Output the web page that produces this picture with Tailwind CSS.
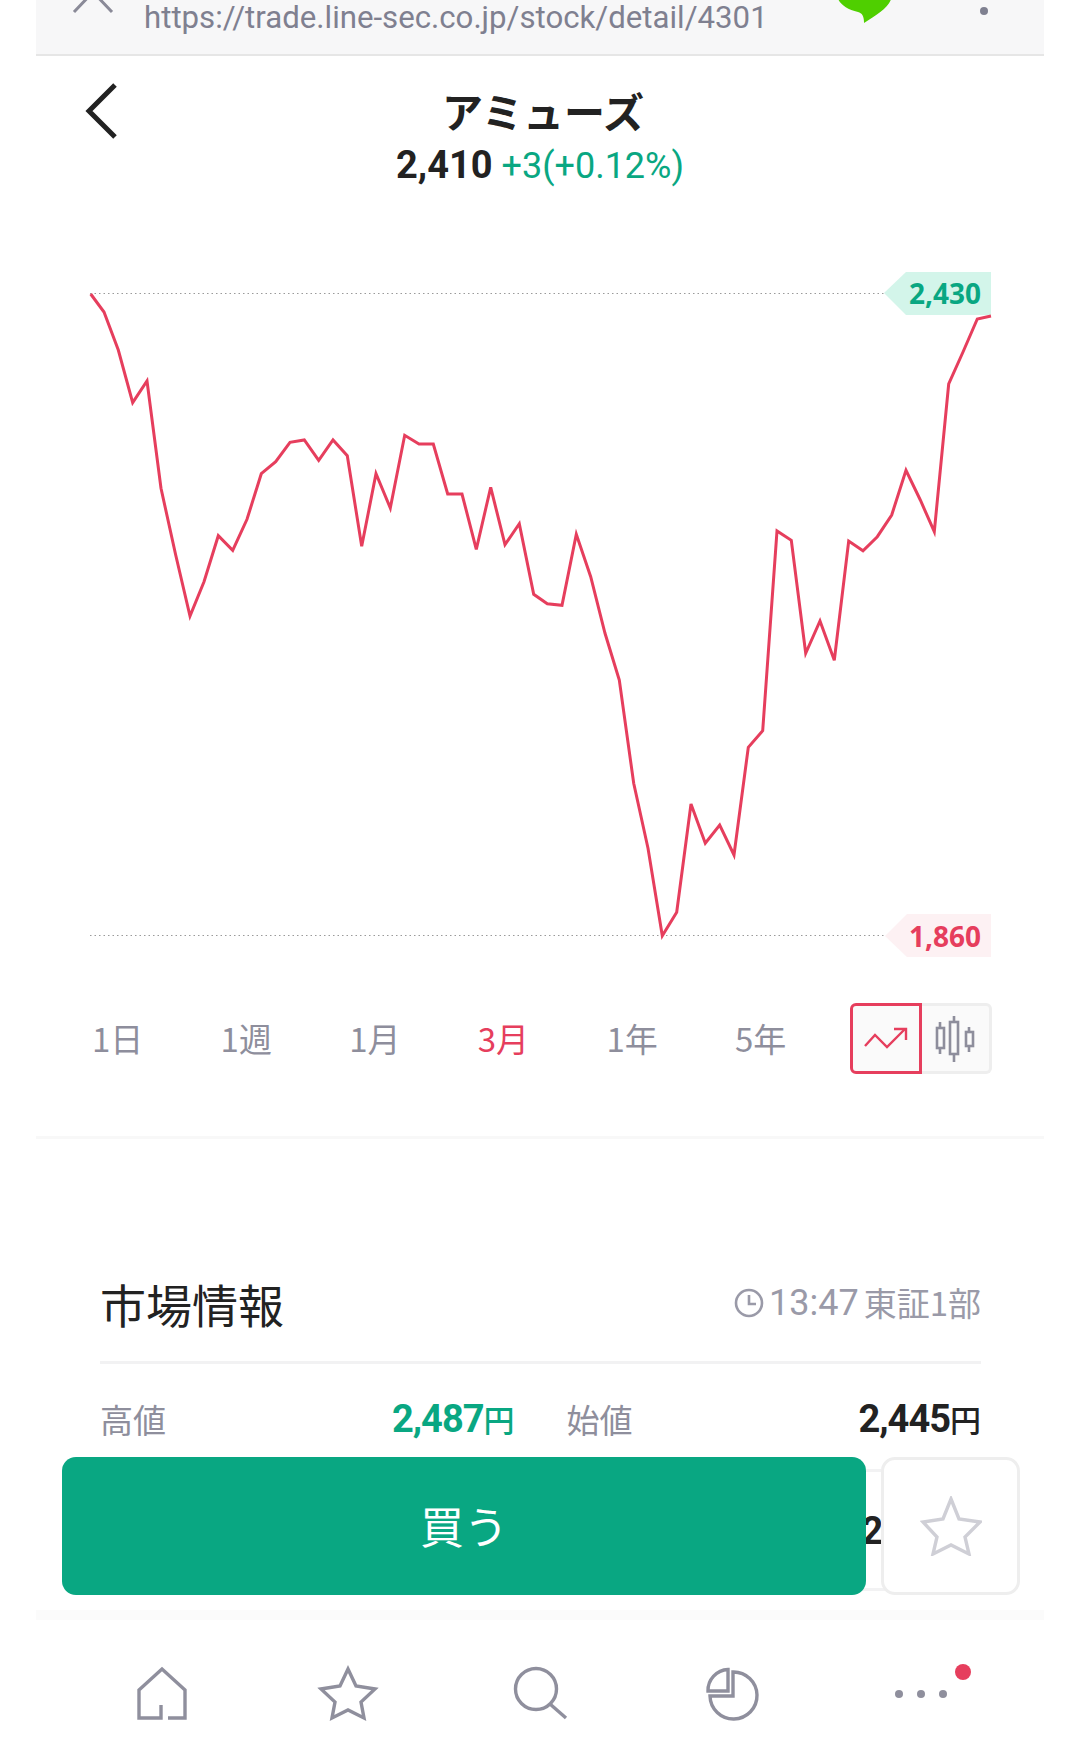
<!DOCTYPE html>
<html lang="ja">
<head>
<meta charset="UTF-8">
<meta name="viewport" content="width=device-width, initial-scale=1.0">
<title>アミューズ</title>
<script src="https://cdn.jsdelivr.net/npm/@tailwindcss/browser@4"></script>
</head>
<body class="bg-white">
<div class="relative w-[1080px] h-[1760px] overflow-hidden bg-white px-[36px] font-['Roboto','Noto_Sans_CJK_JP',sans-serif] text-[#222]">

  <!-- browser bar -->
  <div class="relative h-[56px] bg-[#f7f7f8] border-b-2 border-[#e6e6e6] pl-[108px] text-[31.2px] leading-[36px] text-[#7f8090]">
    <svg class="absolute left-0 top-0 overflow-visible" width="1008" height="54" viewBox="36 0 1008 54" fill="none">
      <path d="M74 12 L93 -8 L112 12" stroke="#8a8a98" stroke-width="3"/>
      <path d="M864 -34 C884 -34 892 -20 892 -6 C892 6 878 14 864 23 C864 16 862 13 858 12 C845 9 837 2 837 -6 C837 -20 846 -34 864 -34Z" fill="#4fcf00"/>
      <circle cx="984" cy="11" r="4" fill="#7f8090"/>
    </svg>
    <div class="whitespace-nowrap">https://trade.line-sec.co.jp/stock/detail/4301</div>
  </div>

  <!-- header -->
  <div class="relative pt-[32px] text-center">
    <svg class="absolute left-0 top-0" width="120" height="100" viewBox="36 56 120 100" fill="none">
      <path d="M115 85 L89 111 L115 137" stroke="#222" stroke-width="5"/>
    </svg>
    <div class="h-[51px] pl-[6px] leading-[52px] text-[41px] font-bold">アミューズ</div>
    <div class="h-[52px] leading-[52px] text-[36px]"><span class="text-[38px] font-bold">2,410</span> <span class="text-[#09a782]">+3(+0.12%)</span></div>
  </div>

  <!-- chart -->
  <svg class="mt-[9px] block" width="1008" height="780" viewBox="36 200 1008 780" fill="none">
    <line x1="90" y1="293.5" x2="884" y2="293.5" stroke="#9a9a9a" stroke-width="1" stroke-dasharray="1.5 3"/>
    <line x1="90" y1="935.5" x2="885" y2="935.5" stroke="#9a9a9a" stroke-width="1" stroke-dasharray="1.5 3"/>
    <polygon points="884,293 906,272 991,272 991,315 906,315" fill="#d3f5ea"/>
    <polygon points="885,936 907,914 991,914 991,957 907,957" fill="#fdf1f3"/>
    <text x="981" y="304" text-anchor="end" font-family="Open Sans" font-weight="700" font-size="28" fill="#09a782">2,430</text>
    <text x="981" y="947" text-anchor="end" font-family="Open Sans" font-weight="700" font-size="28" fill="#e63e5d">1,860</text>
    <polyline stroke="#e63e5d" stroke-width="3" stroke-linejoin="miter" points="90.7,294 104,312 118.3,350 132.7,402.7 147,381 161,488.3 175.7,555 190,616 204,581.7 218.3,535.7 232.7,550.3 247,519.3 261.3,473.7 275.7,461.7 290,442.3 304.3,440 318.7,460.3 333,440 347.3,455.7 361.7,546.3 376,473.7 390.3,508 404.7,435.3 419,444 433.3,444 447.7,494 462,494 476.3,549.3 490.7,487.3 505,544.7 519.3,523.7 533.7,594.3 547.3,603.7 562,605.3 576.3,534.3 590.7,576.7 605,633.3 619.3,680 633.7,783.3 648,848.3 662.3,935.7 676.7,912.3 691,804 705.3,843.3 719.7,825 734,855 748.3,747.3 762.7,730.7 777,531 791.3,540.3 805.7,653.3 820,621 834.3,660.3 848.7,541 863,550.7 877.3,536.7 891.7,515 906,470.4 920.3,500 934.3,531.7 948.7,384 963,352 977.3,319 991,316"/>
  </svg>

  <!-- range tabs -->
  <div class="flex items-center mt-[23px] h-[71px] pl-[56px] font-['Noto_Sans_CJK_JP',sans-serif] text-[33px] text-[#8e8e9c]">
    <div class="w-[128.6px]">1日</div>
    <div class="w-[128.6px]">1週</div>
    <div class="w-[128.6px]">1月</div>
    <div class="w-[128.6px] text-[#e63e5d]">3月</div>
    <div class="w-[128.6px]">1年</div>
    <div class="w-[115px]">5年</div>
    <div class="flex h-[71px]">
      <div class="flex items-center justify-center w-[72px] h-[71px] rounded-l-md border-[3px] border-[#e63e5d] bg-[#fafafa]">
        <svg width="44" height="24" viewBox="865 1028 44 24" fill="none" stroke="#e63e5d" stroke-width="2.4">
          <path d="M866 1047 L876 1036 L888 1048 L906 1030"/>
          <path d="M895 1030 H907 V1041"/>
        </svg>
      </div>
      <div class="flex items-center justify-center w-[70px] h-[71px] rounded-r-md border-[3px] border-l-0 border-[#eeeeee] bg-[#fafafa]">
        <svg width="40" height="46" viewBox="936 1016 40 46" fill="none" stroke="#8e8e9c" stroke-width="2.6">
          <path d="M941 1022 V1054 M955 1016 V1062 M970 1027 V1052"/>
          <rect x="938" y="1028" width="7" height="20" fill="#fafafa"/>
          <rect x="951" y="1022" width="8" height="32" fill="#fafafa"/>
          <rect x="967" y="1032" width="7" height="14" fill="#fafafa"/>
        </svg>
      </div>
    </div>
  </div>

  <div class="mt-[62px] h-[3px] bg-[#f8f8f8]"></div>

  <!-- market info -->
  <div class="pl-[64px] pr-[63px] pt-[139px]">
    <div class="flex items-center justify-between h-[50px]">
      <div class="font-['Noto_Sans_CJK_JP',sans-serif] text-[46px] leading-[50px]">市場情報</div>
      <div class="flex items-center text-[#9a9aa8]">
        <svg width="30" height="30" viewBox="733 1288 30 30" fill="none" stroke="#9a9aa8" stroke-width="2.6">
          <circle cx="748" cy="1303" r="13"/>
          <path d="M748 1295 V1304 H755"/>
        </svg>
        <span class="ml-[5px] text-[36px]">13:47</span>
        <span class="ml-[5px] font-['Noto_Sans_CJK_JP',sans-serif] text-[33px]">東証1部</span>
      </div>
    </div>
    <div class="mt-[33px] h-[3px] bg-[#f2f2f3]"></div>
    <div class="grid grid-cols-2 gap-x-[52px]">
      <div class="flex items-center justify-between h-[108px] pt-[6px] border-b-[3px] border-[#f2f2f3]">
        <span class="font-['Noto_Sans_CJK_JP',sans-serif] text-[33px] text-[#8e8e9c]">高値</span>
        <span class="text-[38px] font-bold text-[#09a782] tracking-[-1px]">2,487<span class="font-['Noto_Sans_CJK_JP',sans-serif] text-[31px] font-medium tracking-normal">円</span></span>
      </div>
      <div class="flex items-center justify-between h-[108px] pt-[6px] border-b-[3px] border-[#f2f2f3]">
        <span class="font-['Noto_Sans_CJK_JP',sans-serif] text-[33px] text-[#8e8e9c]">始値</span>
        <span class="text-[38px] font-bold tracking-[-1px]">2,445<span class="font-['Noto_Sans_CJK_JP',sans-serif] text-[31px] font-medium tracking-normal">円</span></span>
      </div>
      <div class="h-[119px] border-b-[3px] border-[#f2f2f3]"></div>
      <div class="flex items-center justify-end h-[119px] pt-[2px] border-b-[3px] border-[#f2f2f3]">
        <span class="mr-[-3px] text-[38px] font-bold tracking-[-1px]">2,407<span class="font-['Noto_Sans_CJK_JP',sans-serif] text-[31px] font-medium tracking-normal">円</span></span>
      </div>
    </div>
  </div>

  <!-- buy bar -->
  <div class="absolute left-[62px] top-[1457px] flex gap-[15px]">
    <div class="flex items-center justify-center w-[804px] h-[138px] rounded-[14px] bg-[#09a782] text-white font-['Noto_Sans_CJK_JP',sans-serif] text-[44px] pb-[2px]">買う</div>
    <div class="flex items-center justify-center w-[139px] h-[138px] rounded-[14px] border-[3px] border-[#eeeeee] bg-white">
      <svg width="62" height="60" viewBox="919 1495 62 60" fill="none" stroke="#cfcfd6" stroke-width="3.4">
        <path d="M950 1498 L958 1518 L979 1521 L964 1536 L968 1553 L950 1544 L932 1553 L936 1536 L922 1521 L942 1518Z"/>
      </svg>
    </div>
  </div>

  <!-- bottom nav -->
  <div class="absolute left-[36px] top-[1610px] w-[1008px] h-[150px] bg-white border-t-[10px] border-[#fbfbfb]">
    <div class="flex px-[30px] pt-[40px]">
      <div class="flex justify-center w-[189.6px]">
        <svg width="80" height="70" viewBox="121 1660 80 70" fill="none" stroke="#8f8f9d" stroke-width="3.4">
          <path d="M161 1705 V1718 H139 V1690 L162 1669 L185 1690 V1718 H168"/>
        </svg>
      </div>
      <div class="flex justify-center w-[189.6px]">
        <svg width="80" height="70" viewBox="310 1660 80 70" fill="none" stroke="#8f8f9d" stroke-width="3.4">
          <path d="M348 1669 L356 1686 L375 1689 L361 1702 L364 1718 L348 1710 L332 1718 L335 1702 L321 1689 L340 1686Z"/>
        </svg>
      </div>
      <div class="flex justify-center w-[189.6px]">
        <svg width="80" height="70" viewBox="500 1660 80 70" fill="none" stroke="#8f8f9d" stroke-width="3.4">
          <circle cx="536" cy="1689" r="20.500"/>
          <path d="M550 1704 L566 1718"/>
        </svg>
      </div>
      <div class="flex justify-center w-[189.6px]">
        <svg width="80" height="70" viewBox="690 1660 80 70" fill="none" stroke="#8f8f9d" stroke-width="3.4">
          <path d="M733 1672 A23.500 23.500 0 1 1 710 1696 H733 Z"/>
          <path d="M728 1669.500 V1691 H708 A21 21 0 0 1 728 1669.500 Z"/>
        </svg>
      </div>
      <div class="flex justify-center w-[189.6px]">
        <svg class="overflow-visible" width="80" height="70" viewBox="879 1660 80 70" fill="#8f8f9d">
          <circle cx="899" cy="1694" r="4"/>
          <circle cx="921" cy="1694" r="4"/>
          <circle cx="943" cy="1694" r="4"/>
          <circle cx="963" cy="1672" r="8" fill="#e63e5d"/>
        </svg>
      </div>
    </div>
  </div>
</div>
</body>
</html>
